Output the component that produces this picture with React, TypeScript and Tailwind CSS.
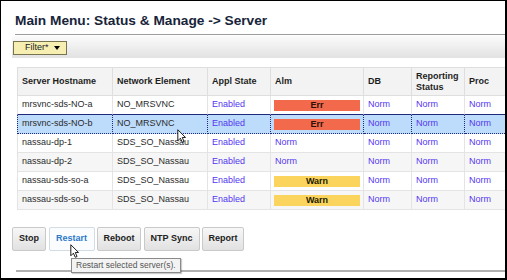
type Row = {
  host: string;
  ne: string;
  alm: 'Err' | 'Warn' | 'Norm';
};

const rows: Row[] = [
  { host: 'mrsvnc-sds-NO-a', ne: 'NO_MRSVNC', alm: 'Err' },
  { host: 'mrsvnc-sds-NO-b', ne: 'NO_MRSVNC', alm: 'Err' },
  { host: 'nassau-dp-1', ne: 'SDS_SO_Nassau', alm: 'Norm' },
  { host: 'nassau-dp-2', ne: 'SDS_SO_Nassau', alm: 'Norm' },
  { host: 'nassau-sds-so-a', ne: 'SDS_SO_Nassau', alm: 'Warn' },
  { host: 'nassau-sds-so-b', ne: 'SDS_SO_Nassau', alm: 'Warn' },
];

const SELECTED = 1;
const widths = ['w-[96px]', 'w-[95px]', 'w-[63px]', 'w-[93px]', 'w-[48px]', 'w-[53px]', 'w-[60px]'];

function Cursor() {
  return (
    <svg width="9" height="14" viewBox="0 0 12 19">
      <path d="M1 1 L1 16 L4.5 12.5 L7 18 L9.5 17 L7 11.5 L11.5 11.5 Z" fill="#fff" stroke="#000" strokeWidth="1.2" strokeLinejoin="round" />
    </svg>
  );
}

function Alm({ v }: { v: Row['alm'] }) {
  if (v === 'Norm') return <span className="pl-[4px] text-[#5536f2]">Norm</span>;
  return (
    <div className="w-full px-[3px]">
      <div
        className={
          v === 'Err'
            ? 'h-[11px] bg-[#f26a4b] text-[#2a0f08] font-bold text-center leading-[11px]'
            : 'h-[11px] bg-[#fbd45e] text-[#221a00] font-bold text-center leading-[11px]'
        }
      >
        {v}
      </div>
    </div>
  );
}

export default function App() {
  const headers = ['Server Hostname', 'Network Element', 'Appl State', 'Alm', 'DB', 'Reporting\nStatus', 'Proc'];
  const buttons = [
    { label: 'Stop', w: 'w-[34px]' },
    { label: 'Restart', w: 'w-[46px]', hover: true },
    { label: 'Reboot', w: 'w-[44px]' },
    { label: 'NTP Sync', w: 'w-[56px]' },
    { label: 'Report', w: 'w-[42px]' },
  ];

  return (
    <div
      className="relative w-[507px] h-[280px] overflow-hidden bg-white border-l border-t border-r-2 border-b-2 border-black flex flex-col"
      style={{ fontFamily: '"Liberation Sans", Arial, sans-serif' }}
    >
      {/* Title */}
      <div className="pt-[10px] pl-[14px] h-[30px] text-[13.7px] leading-[20px] font-bold text-[#17243a] whitespace-nowrap">
        Main Menu: Status &amp; Manage -&gt; Server
      </div>
      <div className="mt-[3px] ml-[14px] h-[1px] bg-[#9c9c9c]" />

      {/* Toolbar */}
      <div className="mt-[1px] ml-[11px] h-[22px] bg-gradient-to-b from-[#fbfbfb] to-[#e2e2e2] pl-[1px] pt-[5px]">
        <div className="w-[54px] h-[14px] bg-[#f7efb2] border border-[#77734f] flex items-center pl-[11px] gap-[5px] text-[9px] text-[#222]">
          <span>Filter*</span>
          <span className="w-0 h-0 border-l-[3px] border-r-[3px] border-t-[4px] border-l-transparent border-r-transparent border-t-black" />
        </div>
      </div>

      {/* Table */}
      <div className="mt-[9px] ml-[16px] text-[9px] text-[#2b2b2b] whitespace-nowrap">
        <div className="flex h-[29px] bg-[#f3f3f3] border-t border-[#dedede]">
          {headers.map((h, i) => (
            <div
              key={h}
              className={`${widths[i]} shrink-0 flex items-center pl-[4px] font-bold text-[#1e1e1e] leading-[11px] whitespace-pre border-r border-b border-[#dedede] ${i === 0 ? 'border-l' : ''}`}
            >
              {h}
            </div>
          ))}
        </div>
        {rows.map((r, ri) => {
          const sel = ri === SELECTED;
          const nextSel = ri + 1 === SELECTED;
          const bg = sel ? 'bg-[#bddcfb]' : ri % 2 === 1 ? 'bg-[#f6f6f6]' : 'bg-white';
          const cells = [
            <span className="pl-[4px]">{r.host}</span>,
            <span className="pl-[4px]">{r.ne}</span>,
            <span className="pl-[4px] text-[#5536f2]">Enabled</span>,
            <Alm v={r.alm} />,
            <span className="pl-[4px] text-[#5536f2]">Norm</span>,
            <span className="pl-[4px] text-[#5536f2]">Norm</span>,
            <span className="pl-[4px] text-[#5536f2]">Norm</span>,
          ];
          return (
            <div key={r.host} className={`flex h-[19px] ${bg}`}>
              {cells.map((c, ci) => (
                <div
                  key={ci}
                  className={`${widths[ci]} shrink-0 flex items-center border-r border-b ${ci === 0 ? 'border-l' : ''} ${
                    sel
                      ? 'border-dotted border-[#1f2b7a]'
                      : nextSel
                      ? 'border-[#e4e4e4] border-b-[#1f2b7a] border-b-dotted'
                      : 'border-[#e4e4e4]'
                  }`}
                >
                  {c}
                </div>
              ))}
            </div>
          );
        })}
      </div>

      {/* Buttons */}
      <div className="mt-[17px] ml-[11px] flex gap-[2.5px]">
        {buttons.map((b) => (
          <div
            key={b.label}
            className={`${b.w} h-[24px] flex items-center justify-center rounded-[2px] border text-[9px] font-bold whitespace-nowrap ${
              b.hover
                ? 'bg-[#fbfcfe] border-[#d3dbe3] text-[#2c78c9]'
                : 'bg-gradient-to-b from-[#f7f7f7] to-[#e1e1e1] border-[#c9c9c9] text-[#222]'
            }`}
          >
            {b.label}
          </div>
        ))}
      </div>

      <div className="mt-[19px] ml-[15px] h-[2px] bg-[#b0b0b0]" />

      {/* Tooltip */}
      <div className="absolute left-[70px] top-[257px] h-[15px] px-[4px] bg-[#f3f3f3] border border-[#8a8a8a] shadow-[1px_1px_1px_rgba(0,0,0,0.2)] text-[8.5px] leading-[13px] text-[#555] whitespace-nowrap">
        Restart selected server(s).
      </div>

      {/* Cursors */}
      <div className="absolute left-[176px] top-[128px]">
        <Cursor />
      </div>
      <div className="absolute left-[69px] top-[243px]">
        <Cursor />
      </div>
    </div>
  );
}
